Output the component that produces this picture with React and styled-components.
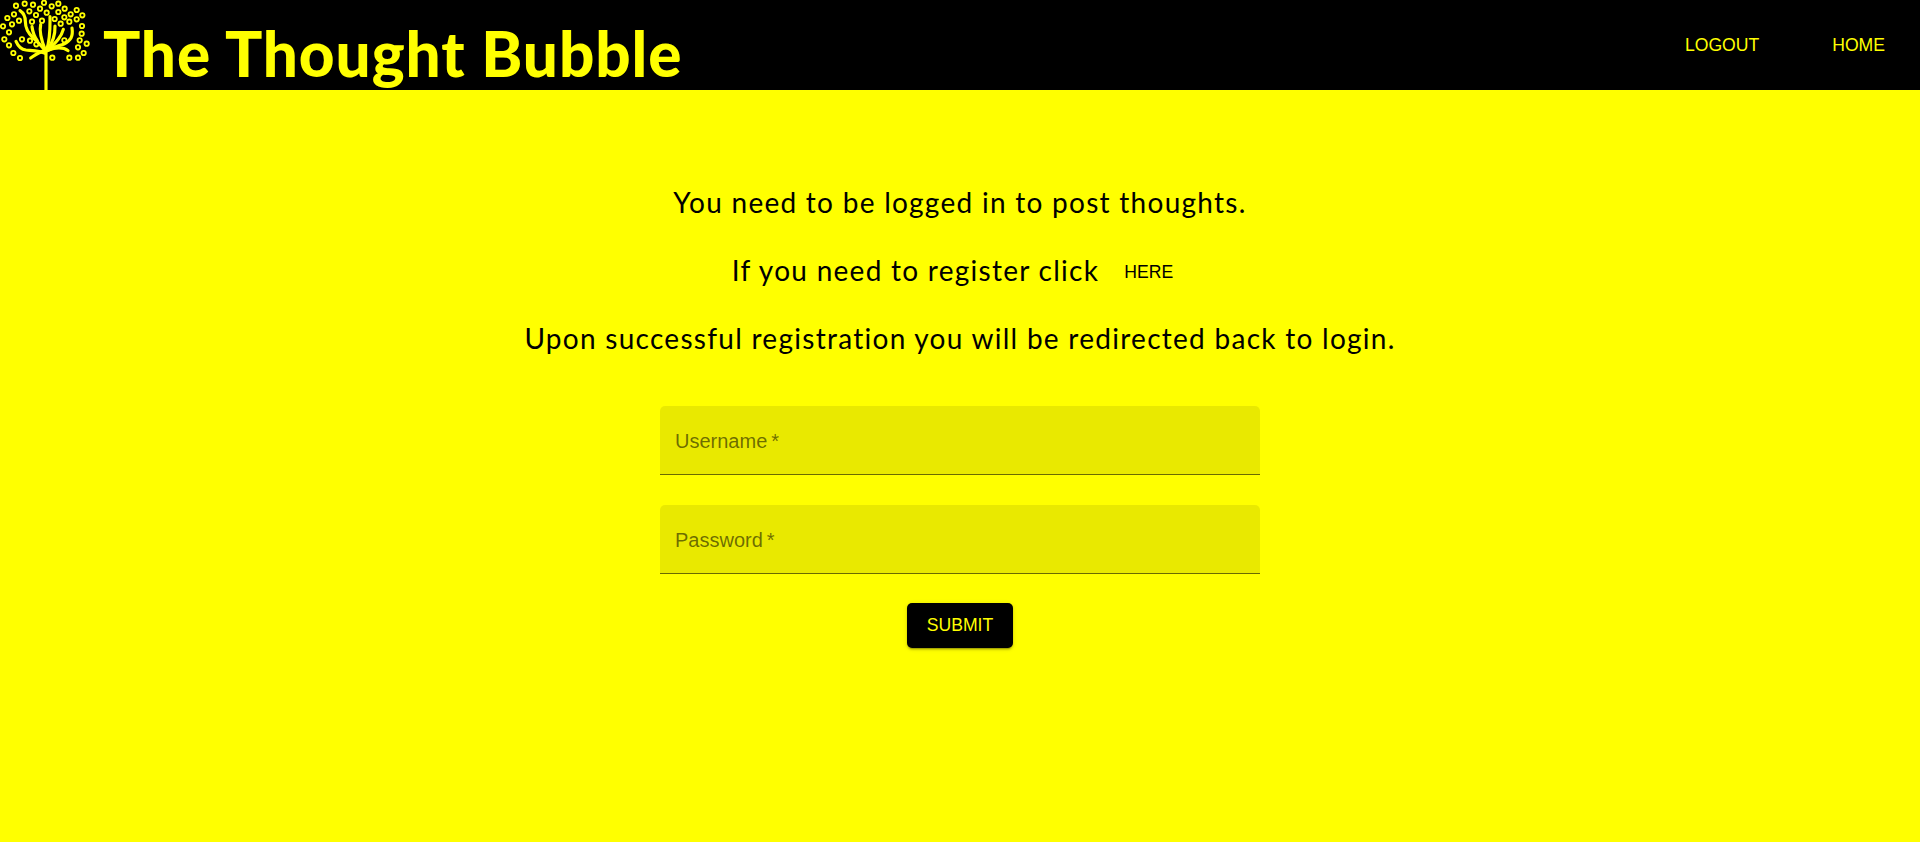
import React from "react";
import styled, { createGlobalStyle } from "styled-components";

const Global = createGlobalStyle`
  html, body { margin: 0; padding: 0; background: #ffff00; }
  body { font-family: "Liberation Sans", Arial, sans-serif; }
`;
const Page = styled.div`
  min-height: 842px;
  background: #ffff00;
  display: flex;
  flex-direction: column;
  overflow: hidden;
`;
const Header = styled.header`
  height: 90px;
  background: #000;
  color: #ffff00;
  display: flex;
  align-items: center;
  justify-content: space-between;
  padding-right: 35px;
`;
const Brand = styled.div`
  display: flex;
  align-items: flex-start;
  height: 90px;
`;
const Title = styled.h1`
  margin: 0 0 0 3px;
  font-family: "Lato", sans-serif;
  font-weight: 900;
  font-size: 62px;
  line-height: 106px;
  letter-spacing: 0.95px;
  white-space: nowrap;
`;
const Nav = styled.nav`
  display: flex;
  gap: 73px;
`;
const NavLink = styled.a`
  font-size: 17.6px;
  line-height: 24px;
  color: #ffff00;
`;
const Main = styled.main`
  display: flex;
  flex-direction: column;
  align-items: center;
  padding-top: 83px;
`;
const Line = styled.p`
  margin: 0;
  height: 68px;
  line-height: 58px;
  font-family: "Lato", sans-serif;
  font-size: 28px;
  letter-spacing: 1.27px;
  color: #000;
  white-space: nowrap;
`;
const InlineLink = styled.a`
  font-family: "Liberation Sans", Arial, sans-serif;
  font-size: 17.6px;
  letter-spacing: 0;
  margin: 0 15px 0 25px;
  vertical-align: 3px;
  color: #000;
`;
const Form = styled.form`
  width: 600px;
  margin-top: 29px;
  display: flex;
  flex-direction: column;
  align-items: center;
`;
const Input = styled.input`
  box-sizing: border-box;
  display: block;
  width: 100%;
  height: 69px;
  margin-bottom: 30px;
  padding: 2px 15px 0;
  border: 0;
  border-bottom: 1px solid rgba(0, 0, 0, 0.55);
  border-radius: 5px 5px 0 0;
  background: rgba(0, 0, 0, 0.085);
  outline: none;
  font-family: "Liberation Sans", Arial, sans-serif;
  font-size: 20px;
  &::placeholder {
    color: rgba(0, 0, 0, 0.55);
    opacity: 1;
  }
`;
const Submit = styled.button`
  width: 106px;
  height: 45px;
  margin-top: -1px;
  border: 0;
  border-radius: 5px;
  background: #000;
  color: #ffff00;
  font-family: "Liberation Sans", Arial, sans-serif;
  font-size: 17.6px;
  box-shadow: 0 3px 1px -2px rgba(0,0,0,.2), 0 2px 2px 0 rgba(0,0,0,.14), 0 1px 5px 0 rgba(0,0,0,.12);
`;

const leaves = [[48,17],[74,11],[99,14],[132,8],[155,19],[175,11],[194,26],[230,30],[247,46],[212,43],[193,52],[175,36],[140,38],[120,26],[88,34],[108,45],[42,43],[22,54],[57,62],[36,73],[9,79],[27,97],[13,118],[27,136],[40,159],[60,174],[66,118],[90,122],[109,133],[96,65],[126,62],[164,57],[182,71],[208,65],[230,58],[246,78],[245,101],[239,121],[260,131],[234,142],[251,159],[234,173],[208,173],[157,173],[193,121]];

const branches = [
  "M138 270V150",
  "M60 32C72 40 76 48 76 64C76 84 84 100 100 114C116 128 126 140 136 152",
  "M96 80C98 95 102 108 112 122",
  "M122 74C118 92 122 116 136 150",
  "M48 124C54 138 62 148 78 150C100 152 120 152 136 160",
  "M92 174C104 166 116 156 136 152",
  "M150 50C150 80 152 110 140 150",
  "M165 78C166 105 160 125 142 150",
  "M190 88C184 110 170 125 146 148",
  "M216 84C220 110 212 122 192 132C176 138 160 140 142 152",
  "M146 150C165 142 190 140 204 152",
];

const Tree = () => (
  <svg width="100" height="90" viewBox="0 0 300 270" aria-hidden="true">
    <g fill="none" stroke="#ffff00" strokeLinecap="round" strokeLinejoin="round">
      <g strokeWidth="9.5">
        {branches.map((d) => <path key={d} d={d} />)}
      </g>
      <g strokeWidth="5.5">
        {leaves.map(([x, y]) => <circle key={`${x}-${y}`} cx={x} cy={y} r="6.5" />)}
      </g>
    </g>
  </svg>
);

export default function App() {
  return (
    <Page>
      <Global />
      <Header>
        <Brand>
          <Tree />
          <Title>The Thought Bubble</Title>
        </Brand>
        <Nav>
          <NavLink>LOGOUT</NavLink>
          <NavLink>HOME</NavLink>
        </Nav>
      </Header>
      <Main>
        <Line>You need to be logged in to post thoughts.</Line>
        <Line>If you need to register click<InlineLink>HERE</InlineLink></Line>
        <Line>Upon successful registration you will be redirected back to login.</Line>
        <Form onSubmit={(e) => e.preventDefault()}>
          <Input placeholder={"Username\u2009*"} />
          <Input type="password" placeholder={"Password\u2009*"} />
          <Submit type="submit">SUBMIT</Submit>
        </Form>
      </Main>
    </Page>
  );
}
